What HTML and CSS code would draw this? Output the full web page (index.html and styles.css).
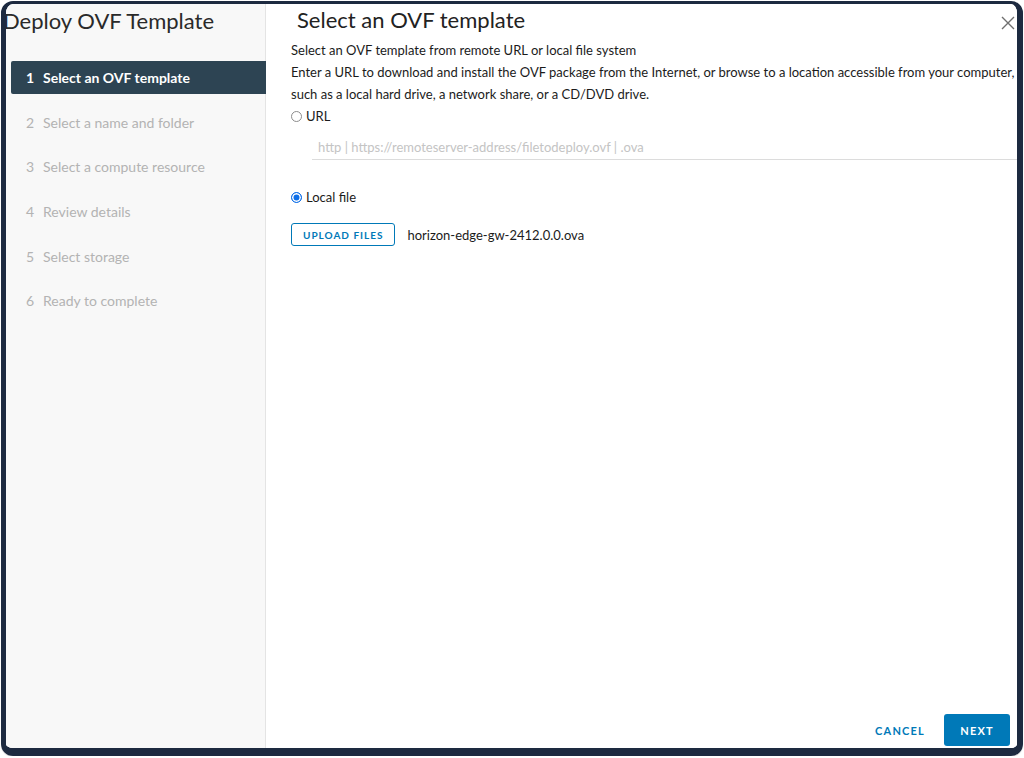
FILE: index.html
```html
<!DOCTYPE html>
<html lang="en">
<head>
    <meta charset="UTF-8">
    <title>Deploy OVF Template</title>
    <link rel="stylesheet" href="styles.css">
</head>
<body>

<div class="modal">
    <div class="sidebar">
        <h1 class="wizard-title">Deploy OVF Template</h1>
        <ul class="steps">
            <li class="step active"><span class="num">1</span>Select an OVF template</li>
            <li class="step"><span class="num">2</span>Select a name and folder</li>
            <li class="step"><span class="num">3</span>Select a compute resource</li>
            <li class="step"><span class="num">4</span>Review details</li>
            <li class="step"><span class="num">5</span>Select storage</li>
            <li class="step"><span class="num">6</span>Ready to complete</li>
        </ul>
    </div>

    <div class="content">
        <div class="content-header">
            <h2>Select an OVF template</h2>
            <button class="close" aria-label="Close">
                <svg width="14" height="14" viewBox="0 0 14 14">
                    <path d="M1 1 L13 13 M13 1 L1 13" stroke="#6f6f6f" stroke-width="1.4" fill="none"/>
                </svg>
            </button>
        </div>

        <div class="content-body">
            <p class="line">Select an OVF template from remote URL or local file system</p>
            <p class="line">Enter a URL to download and install the OVF package from the Internet, or browse to a location accessible from your computer,</p>
            <p class="line">such as a local hard drive, a network share, or a CD/DVD drive.</p>

            <label class="radio">
                <span class="dot"></span>URL
            </label>
            <div class="url-field">
                <input type="text" placeholder="http | https://remoteserver-address/filetodeploy.ovf | .ova">
            </div>

            <label class="radio local">
                <span class="dot checked"></span>Local file
            </label>
            <div class="upload-row">
                <button class="btn-outline">UPLOAD FILES</button>
                <span class="file-name">horizon-edge-gw-2412.0.0.ova</span>
            </div>
        </div>

        <div class="actions">
            <button class="btn-link">CANCEL</button>
            <button class="btn-primary">NEXT</button>
        </div>
    </div>
</div>

</body>
</html>
```

FILE: styles.css
```css
body {
    margin: 0;
    background: #fff;
    font-family: "Lato", "Open Sans", sans-serif;
    color: #1b1b1b;
}

.modal {
    box-sizing: border-box;
    margin: 1px 1px 0 1px;
    height: 755px;
    border-style: solid;
    border-color: #1d2a40;
    border-width: 3px 6px 8px 5px;
    border-radius: 12px;
    display: flex;
    overflow: hidden;
    box-shadow: 0 1px 1px rgba(0, 0, 0, 0.15);
}

/* 左侧步骤栏 */

.sidebar {
    width: 259px;
    flex-shrink: 0;
    background: #f8f8f8;
    border-right: 1px solid #e4e4e4;
}

.wizard-title {
    margin: 3px 0 0 -3px;
    font-size: 22px;
    font-weight: 400;
    line-height: 28px;
    color: #2a2a2a;
    white-space: nowrap;
}

.steps {
    list-style: none;
    margin: 26px 0 0 5px;
    padding: 0;
}

.step {
    height: 33px;
    margin-bottom: 11.7px;
    padding-left: 15px;
    display: flex;
    align-items: center;
    font-size: 14px;
    color: #b3b3b3;
    white-space: nowrap;
}

.step .num {
    width: 17px;
}

.step.active {
    background: #2d4453;
    color: #fff;
    font-weight: 700;
    border-radius: 2px 0 0 2px;
    margin-right: -1px;
}

/* 右侧内容 */

.content {
    flex: 1;
    display: flex;
    flex-direction: column;
    background: #fff;
}

.content-header {
    height: 35px;
    display: flex;
    align-items: flex-start;
    justify-content: space-between;
    padding-left: 31px;
}

.content-header h2 {
    margin: 2px 0 0;
    font-size: 22px;
    font-weight: 400;
    line-height: 28px;
    color: #222;
}

.close {
    background: none;
    border: none;
    padding: 0;
    margin: 12px 2px 0 0;
    width: 14px;
    height: 14px;
    cursor: pointer;
}

.content-body {
    flex: 1;
    padding-left: 25px;
}

.line {
    margin: 0;
    font-size: 13px;
    line-height: 22px;
    white-space: nowrap;
}

.radio {
    display: flex;
    align-items: center;
    height: 22px;
    font-size: 13px;
}

.radio .dot {
    box-sizing: border-box;
    width: 11px;
    height: 11px;
    border: 1px solid #8c8c8c;
    border-radius: 50%;
    margin-right: 4px;
    background: #fff;
}

.radio .dot.checked {
    border: 1px solid #0d6ee8;
    box-shadow: inset 0 0 0 1.5px #fff;
    background: #0d6ee8;
}

.url-field {
    margin: 9px 0 0 21px;
}

.url-field input {
    box-sizing: border-box;
    width: 100%;
    border: none;
    border-bottom: 1px solid #dcdcdc;
    padding: 3px 6px 4px;
    font-family: inherit;
    font-size: 13px;
    outline: none;
}

.url-field input::placeholder {
    color: #c4c4c4;
}

.radio.local {
    margin-top: 26px;
}

.upload-row {
    display: flex;
    align-items: center;
    margin-top: 15px;
}

.btn-outline {
    box-sizing: border-box;
    height: 23px;
    padding: 0 11px;
    border: 1px solid #0079b8;
    border-radius: 3px;
    background: #fff;
    color: #0079b8;
    font-family: inherit;
    font-size: 10px;
    font-weight: 700;
    letter-spacing: 1px;
}

.file-name {
    margin-left: 12px;
    font-size: 13px;
}

.actions {
    display: flex;
    justify-content: flex-end;
    align-items: center;
    padding: 0 7px 2px 0;
}

.btn-link {
    background: none;
    border: none;
    color: #0079b8;
    font-family: inherit;
    font-size: 11px;
    font-weight: 700;
    letter-spacing: 1.2px;
    margin-right: 13px;
}

.btn-primary {
    width: 66px;
    height: 32px;
    border: none;
    border-radius: 3px;
    background: #0079b8;
    color: #fff;
    font-family: inherit;
    font-size: 11px;
    font-weight: 700;
    letter-spacing: 1.2px;
}
```
